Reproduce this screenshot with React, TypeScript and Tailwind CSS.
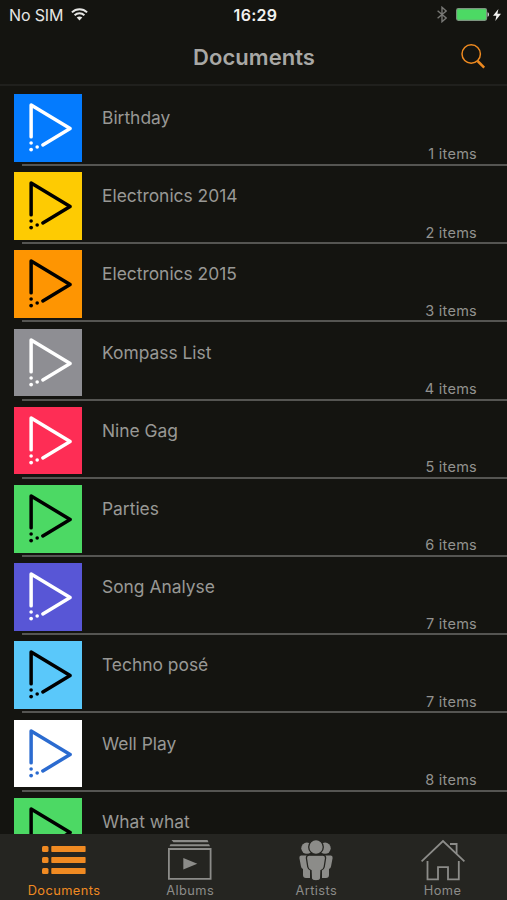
import React from 'react';

type Item = { name: string; count?: number; tile: string; ink: string };

const items: Item[] = [
  { name: 'Birthday', count: 1, tile: 'bg-[#047bfe]', ink: 'text-white' },
  { name: 'Electronics 2014', count: 2, tile: 'bg-[#fecb02]', ink: 'text-black' },
  { name: 'Electronics 2015', count: 3, tile: 'bg-[#fe9502]', ink: 'text-black' },
  { name: 'Kompass List', count: 4, tile: 'bg-[#8e8e93]', ink: 'text-white' },
  { name: 'Nine Gag', count: 5, tile: 'bg-[#fe2d55]', ink: 'text-white' },
  { name: 'Parties', count: 6, tile: 'bg-[#4cd964]', ink: 'text-black' },
  { name: 'Song Analyse', count: 7, tile: 'bg-[#5856d6]', ink: 'text-white' },
  { name: 'Techno posé', count: 7, tile: 'bg-[#5ac8fa]', ink: 'text-black' },
  { name: 'Well Play', count: 8, tile: 'bg-white', ink: 'text-[#2b6bd0]' },
  { name: 'What what', tile: 'bg-[#4cd964]', ink: 'text-black' },
];

function PlayMark() {
  return (
    <svg viewBox="0 0 68 68" className="block size-full" fill="none" stroke="currentColor" strokeWidth="3.5" strokeLinecap="round" strokeLinejoin="round">
      <path d="M17 43.2V11L56.3 34.8L28.8 51.3" />
      <g fill="currentColor" stroke="none">
        <circle cx="17" cy="49.3" r="1.8" />
        <circle cx="17" cy="56" r="1.9" />
        <circle cx="23.1" cy="53.4" r="1.8" />
      </g>
    </svg>
  );
}

function StatusBar() {
  return (
    <div className="grid h-[29px] shrink-0 grid-cols-[1fr_auto_1fr] items-center pl-[9px] pr-[6px] text-[16px] text-[#e6e6e4]">
      <div className="flex items-center gap-[8px]">
        <span className="tracking-[-0.15px]">No SIM</span>
        <svg width="17" height="13" viewBox="0 0 17 13" fill="none" stroke="currentColor" strokeWidth="2">
          <path d="M.9 4.4C5.2.3 11.8.3 16.1 4.4" />
          <path d="M3.6 7.3C6.4 4.7 10.6 4.7 13.4 7.3" />
          <path d="M8.5 12.4L5.7 9.6C7.3 8.1 9.7 8.1 11.3 9.6Z" fill="currentColor" stroke="none" />
        </svg>
      </div>
      <span className="pl-px font-semibold tracking-[0.3px] text-[#f2f2f0]">16:29</span>
      <div className="flex items-center justify-end">
        <svg width="10" height="17" viewBox="0 0 10 17" fill="none" stroke="#777774" strokeWidth="1.4" className="mr-[9px]">
          <path d="M.6 4.7L9.2 12L5 15.7V1.3L9.2 5L.6 12.3" />
        </svg>
        <svg width="33" height="13" viewBox="0 0 33 13" className="mr-[4px]">
          <rect x=".6" y=".6" width="30" height="11.8" rx="1.8" fill="#4cd964" stroke="#7d9580" strokeWidth="1.1" />
          <path d="M31.6 4.2C33.3 4.7 33.3 8.3 31.6 8.8Z" fill="#eee" />
        </svg>
        <svg width="8" height="12" viewBox="0 0 8 12" fill="#f2f2f0">
          <path d="M5.4 0L0 6.8H3.4L2.3 12L8 4.8H4.4Z" />
        </svg>
      </div>
    </div>
  );
}

function Header() {
  return (
    <div className="grid h-[57px] shrink-0 grid-cols-[1fr_auto_1fr] items-center border-b-2 border-[#20201d] pr-[21px]">
      <span />
      <h1 className="pl-[22px] text-[22px] font-semibold leading-[28px] tracking-[0.05px] text-[#a8a8a5]">Documents</h1>
      <button aria-label="Search" className="justify-self-end pb-px">
        <svg width="25" height="25" viewBox="0 0 25 25" fill="none" stroke="#ee8a20" className="block">
          <circle cx="10.2" cy="10" r="9.2" strokeWidth="1.5" />
          <path d="M16.6 17L23.2 23.6" strokeWidth="2.5" />
        </svg>
      </button>
    </div>
  );
}

function Row({ item }: { item: Item }) {
  return (
    <li className="flex h-[78.2px] shrink-0 flex-col">
      <div className="flex min-h-0 flex-1 pl-[14px] pt-[6.2px]">
        <div className={`h-[67.5px] w-[68px] shrink-0 ${item.tile} ${item.ink}`}>
          <PlayMark />
        </div>
        <div className="flex flex-1 flex-col pl-[20px] pr-[30px]">
          <span className="pt-[12px] text-[17.4px] leading-[24px] text-[#989895]">{item.name}</span>
          {item.count !== undefined && (
            <span className="mt-[15.4px] self-end text-[14.5px] leading-[18px] tracking-[0.25px] text-[#92928f]">{item.count} items</span>
          )}
        </div>
      </div>
      <div className="ml-[22px] h-[2px] shrink-0 bg-[#555552]" />
    </li>
  );
}

function DocumentsIcon() {
  return (
    <svg width="44" height="28" viewBox="0 0 44 28" fill="currentColor">
      {[0, 11, 22].map((y) => (
        <g key={y}>
          <rect x="0" y={y} width="6.5" height="6" rx="1.5" />
          <rect x="9.3" y={y} width="34.3" height="6" rx=".7" />
        </g>
      ))}
    </svg>
  );
}

function AlbumsIcon() {
  return (
    <svg width="44" height="40" viewBox="0 0 44 40" fill="currentColor">
      <path d="M3.5 0H39.5L40.5 2.2H5.5Z" />
      <path d="M2.5 4.3H41L42 6.3H1.5Z" />
      <path d="M.9 9H42.6V38.8H.9Z" fill="none" stroke="currentColor" strokeWidth="1.8" />
      <path d="M15.3 18V29.5L29.3 23.7Z" />
    </svg>
  );
}

function ArtistsIcon() {
  return (
    <svg width="34" height="41" viewBox="0 0 34 41" fill="currentColor">
      <circle cx="7.9" cy="8.2" r="5.6" />
      <circle cx="26.1" cy="8.2" r="5.6" />
      <path d="M2 15.5H11V38H7Q4 38 4 35V29Q2.2 28.3 1.9 26L.4 18Q.2 15.5 2 15.5Z" />
      <path d="M32 15.5H23V38H27Q30 38 30 35V29Q31.8 28.3 32.1 26L33.6 18Q33.8 15.5 32 15.5Z" />
      <g stroke="#252521" strokeWidth="1.3">
        <circle cx="17" cy="7" r="7.3" />
        <path d="M7.4 18Q7.4 15.2 10.2 15.2H23.8Q26.6 15.2 26.6 18L25.2 27Q24.8 29.4 22 30.5L21.7 38Q21.4 40.8 17 40.8T12.3 38L12 30.5Q9.2 29.4 8.8 27Z" />
      </g>
    </svg>
  );
}

function HomeIcon() {
  return (
    <svg width="44" height="42" viewBox="0 0 44 42" fill="none" stroke="currentColor" strokeWidth="1.8">
      <path d="M.6 22.4L22 2L43.4 22.4" />
      <path d="M29 5H35.6V14.7" />
      <path d="M6.5 22V40.4H17V28.2H27V40.4H37.8V22" />
    </svg>
  );
}

const tabs = [
  { label: 'Documents', Icon: DocumentsIcon, color: 'text-[#f08a22]' },
  { label: 'Albums', Icon: AlbumsIcon, color: 'text-[#8c8c89]' },
  { label: 'Artists', Icon: ArtistsIcon, color: 'text-[#8c8c89]' },
  { label: 'Home', Icon: HomeIcon, color: 'text-[#8c8c89]' },
];

export default function App() {
  return (
    <div className="flex h-[900px] w-[507px] flex-col overflow-hidden bg-[#141410] font-['Inter','Liberation_Sans',sans-serif]">
      <StatusBar />
      <Header />
      <ul className="flex min-h-0 flex-1 flex-col overflow-hidden pt-[1.9px]">
        {items.map((item) => (
          <Row key={item.name} item={item} />
        ))}
      </ul>
      <nav className="grid h-[66px] shrink-0 grid-cols-4 bg-[#252521] pl-[1px] pr-[1.4px]">
        {tabs.map(({ label, Icon, color }) => (
          <div key={label} className={`flex flex-col items-center ${color}`}>
            <div className="flex h-[49px] items-center pt-[3px]">
              <Icon />
            </div>
            <span className="text-[12.8px] leading-[15px] tracking-[0.45px]">{label}</span>
          </div>
        ))}
      </nav>
    </div>
  );
}
